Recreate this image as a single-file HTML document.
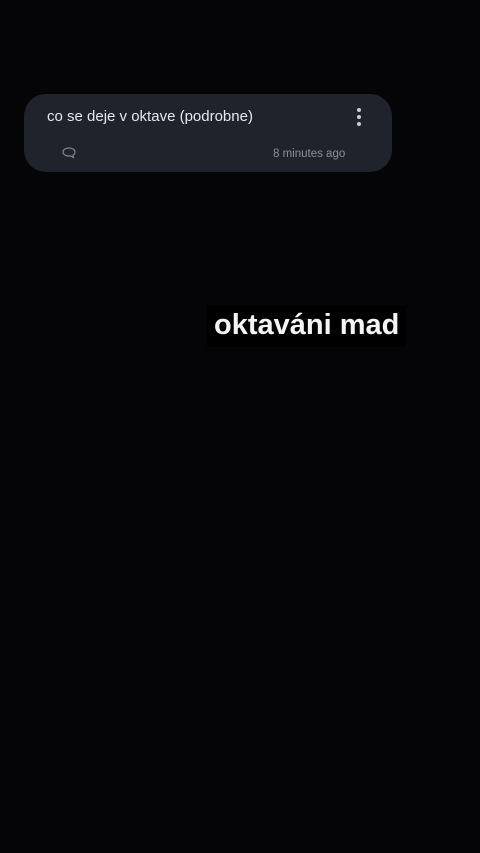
<!DOCTYPE html>
<html><head><meta charset="utf-8"><style>
html,body{margin:0;padding:0;width:480px;height:853px;background:#050507;overflow:hidden;font-family:"Liberation Sans",sans-serif}
.card{position:absolute;left:24px;top:94px;width:368px;height:78px;background:#1e232c;border-radius:22px}
.t{position:absolute;left:23px;top:14px;font-size:15px;color:#e6e8ec}
.dots{position:absolute;left:333px;top:14px;width:5px}
.dots i{display:block;width:4px;height:4px;border-radius:50%;background:#c8ccd2;margin-bottom:3px}
.time{position:absolute;left:249px;top:54px;font-size:11.5px;color:#8a909a}
.ic{position:absolute;left:37px;top:52px}
.cap{position:absolute;left:207px;top:306px;background:#000;padding:3px 7px 5px 7px;color:#f4f4f4;font-weight:bold;font-size:29px}
</style></head><body>
<div class="card">
<div class="t">co se deje v oktave (podrobne)</div>
<div class="dots"><i></i><i></i><i></i></div>
<svg class="ic" width="16" height="14" viewBox="0 0 16 14"><path d="M8 2C4.5 2 2 3.8 2 6s2.5 4 6 4c.6 0 1.2 0 1.7-.1L12.5 11.5 12 9.2C13.3 8.5 14 7.3 14 6c0-2.2-2.5-4-6-4z" fill="none" stroke="#7d8590" stroke-width="1.2"/></svg>
<div class="time">8 minutes ago</div>
</div>
<div class="cap">oktaváni mad</div>
</body></html>
